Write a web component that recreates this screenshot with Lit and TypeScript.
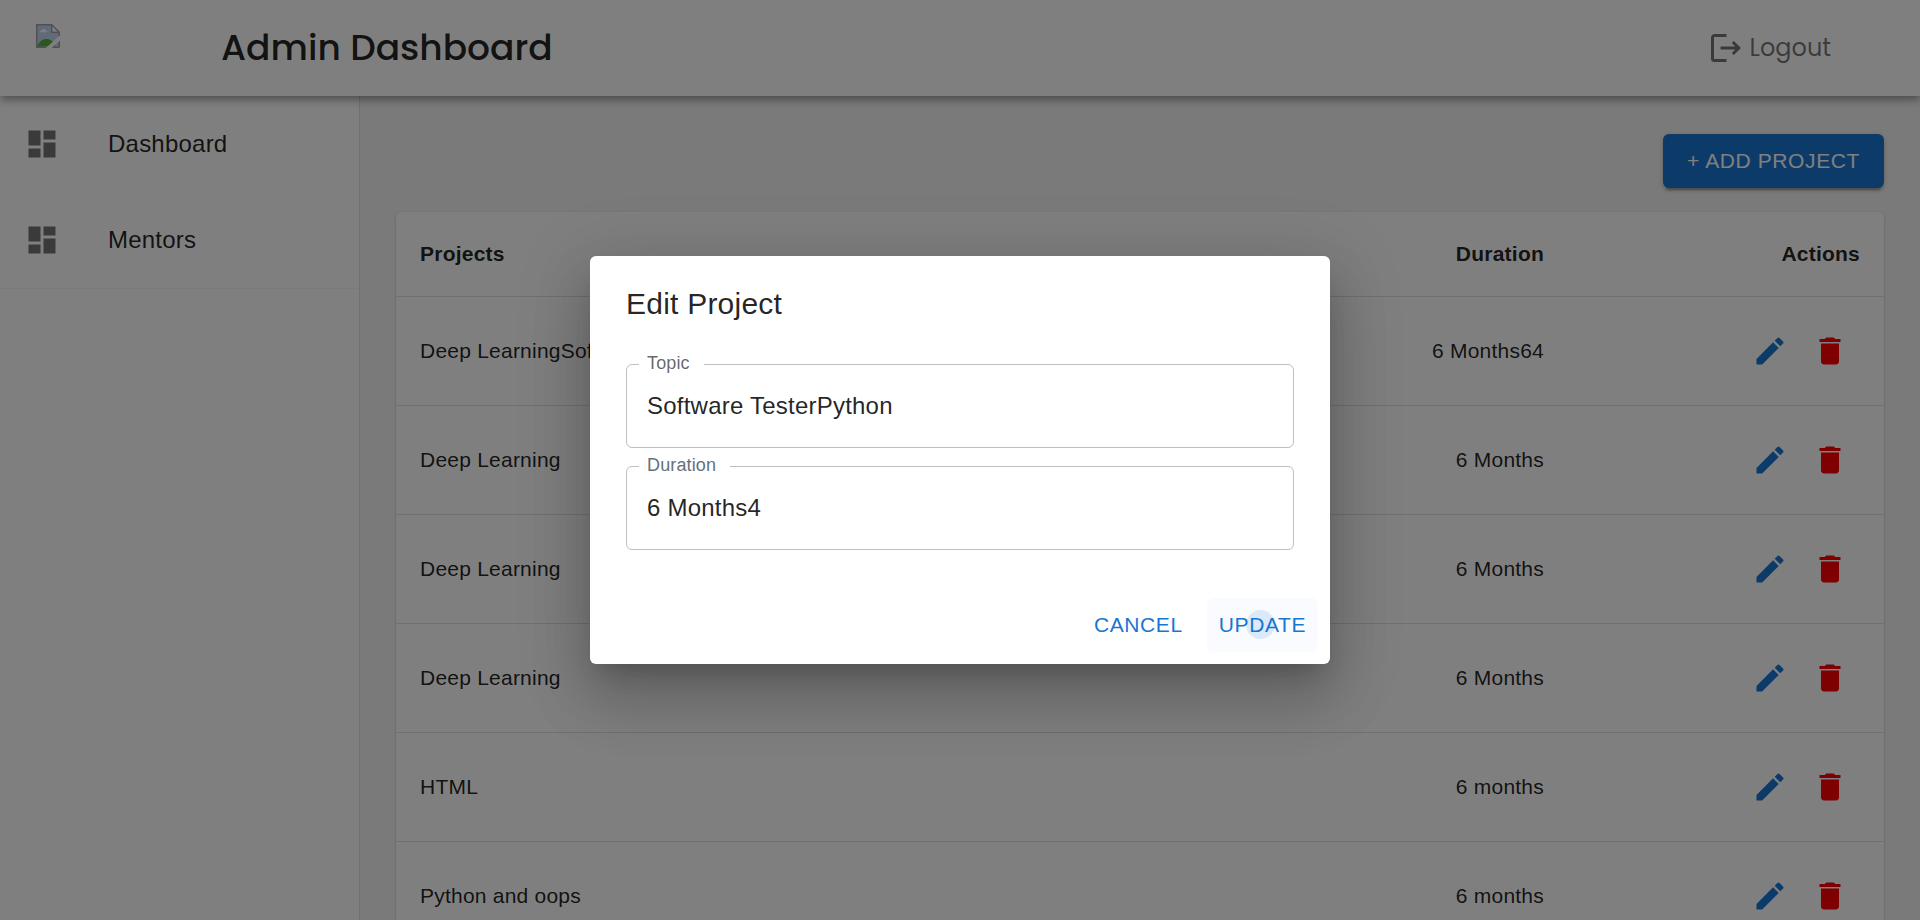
import { LitElement, html, css, svg } from "lit";
import { customElement, property } from "lit/decorators.js";

const icons = {
  dashboard: svg`<path d="M3 13h8V3H3v10zm0 8h8v-6H3v6zm10 0h8V11h-8v10zm0-18v6h8V3h-8z"/>`,
  edit: svg`<path d="M3 17.25V21h3.75L17.81 9.94l-3.75-3.75L3 17.25zM20.71 7.04c.39-.39.39-1.02 0-1.41l-2.34-2.34a.9959.9959 0 0 0-1.41 0l-1.83 1.83 3.75 3.75 1.83-1.83z"/>`,
  trash: svg`<path d="M6 19c0 1.1.9 2 2 2h8c1.1 0 2-.9 2-2V7H6v12zM19 4h-3.5l-1-1h-5l-1 1H5v2h14V4z"/>`,
};

@customElement("app-icon")
class AppIcon extends LitElement {
  @property() name: keyof typeof icons = "edit";
  static styles = css`
    :host { display: block; width: 36px; height: 36px; }
    .glyph { display: block; width: 36px; height: 36px; fill: currentColor; }
  `;
  render() {
    return html`<svg class="glyph" viewBox="0 0 24 24">${icons[this.name]}</svg>`;
  }
}

@customElement("outlined-field")
class OutlinedField extends LitElement {
  @property() label = "";
  @property() value = "";
  static styles = css`
    :host { display: block; color: rgba(0, 0, 0, 0.6); }
    .box {
      box-sizing: border-box; height: 89px; margin: 0; min-width: 0;
      padding: 0 20px; border: 1px solid rgba(0, 0, 0, 0.25); border-radius: 6px;
    }
    .legend {
      height: 11px; padding: 0 14px 0 8px; margin-left: -8px;
      font-size: 18px; line-height: 8px; letter-spacing: 0.127px;
    }
    .value {
      font-size: 24px; line-height: 35px; letter-spacing: 0.225px;
      color: rgba(0, 0, 0, 0.87); padding-top: 18px;
    }
  `;
  render() {
    return html`<fieldset class="box">
      <legend class="legend">${this.label}</legend>
      <div class="value">${this.value}</div>
    </fieldset>`;
  }
}

@customElement("app-root")
class AppRoot extends LitElement {
  private rows = [
    ["Deep LearningSoftware Tester", "6 Months64"],
    ["Deep Learning", "6 Months"],
    ["Deep Learning", "6 Months"],
    ["Deep Learning", "6 Months"],
    ["HTML", "6 months"],
    ["Python and oops", "6 months"],
  ];

  static styles = css`
    :host {
      display: block; position: relative; height: 920px; overflow: hidden;
      font-family: "Liberation Sans", Arial, sans-serif;
      color: rgba(0, 0, 0, 0.87); background: #f5f5f5;
    }
    .page { display: flex; flex-direction: column; height: 920px; }
    .header {
      position: relative; z-index: 1; flex: none; box-sizing: border-box;
      height: 96px; display: flex; align-items: center; background: #fff;
      padding: 0 89px 0 36px; font-family: Poppins, Inter, sans-serif;
      font-feature-settings: "cv11";
      box-shadow: 0 3px 6px -1.5px rgba(0,0,0,.2), 0 6px 7.5px rgba(0,0,0,.14), 0 1.5px 15px rgba(0,0,0,.12);
    }
    .logo { width: 185px; height: 48px; flex: none; }
    .broken { display: block; width: 24px; height: 24px; }
    .title { flex: 1; margin: 0; font-size: 36px; font-weight: 500; line-height: 48px; white-space: nowrap; }
    .logout { display: flex; align-items: center; gap: 9px; font-size: 24px; line-height: 36px; color: rgba(0,0,0,.54); }
    .exit { display: block; width: 30px; height: 28px; fill: none; stroke: #757575; }
    .below { flex: 1; display: flex; min-height: 0; }
    .sidebar { box-sizing: border-box; width: 360px; flex: none; background: #fff; border-right: 1px solid rgba(0,0,0,.12); }
    .nav { border-bottom: 1px solid #f5f5f5; }
    .item { display: flex; align-items: center; height: 96px; padding-left: 24px; font-size: 24px; letter-spacing: 0.225px; }
    .item-label { line-height: 27px; padding-bottom: 1px; }
    .nav-icon { width: 84px; color: rgba(0,0,0,.54); }
    .main { flex: 1; padding: 38px 36px 0; }
    .toolbar { display: flex; justify-content: flex-end; margin-bottom: 24px; }
    .add {
      height: 54px; width: 221px; border-radius: 6px; background: #1976d2; color: #fff;
      font-size: 21px; line-height: 53px; letter-spacing: 0.6px; text-align: center;
      box-shadow: 0 4.5px 1.5px -3px rgba(0,0,0,.2), 0 3px 3px rgba(0,0,0,.14), 0 1.5px 7.5px rgba(0,0,0,.12);
    }
    .card {
      background: #fff; border-radius: 6px;
      box-shadow: 0 3px 1.5px -1.5px rgba(0,0,0,.2), 0 1.5px 1.5px rgba(0,0,0,.14), 0 1.5px 4.5px rgba(0,0,0,.12);
    }
    .row {
      box-sizing: border-box; height: 109px; display: grid; align-items: center;
      grid-template-columns: 1fr 300px 316px; padding: 0 24px;
      border-bottom: 1px solid #e0e0e0; font-size: 21px; letter-spacing: 0.225px;
    }
    .head { height: 85px; font-weight: 700; }
    .cell { line-height: 23px; padding-bottom: 1px; }
    .right { text-align: right; }
    .actions { display: flex; justify-content: flex-end; }
    .action { padding: 12px; }
    .blue { color: #1976d2; }
    .red { color: #f00; }
    .backdrop {
      position: absolute; inset: 0; z-index: 2; display: flex;
      align-items: center; justify-content: center; background: rgba(0,0,0,.5);
    }
    .dialog {
      box-sizing: border-box; width: 740px; height: 408px; display: flex; flex-direction: column;
      background: #fff; border-radius: 6px;
      box-shadow: 0 16.5px 22.5px -10.5px rgba(0,0,0,.2), 0 36px 57px 4.5px rgba(0,0,0,.14), 0 13.5px 69px 12px rgba(0,0,0,.12);
    }
    .dialog-title { margin: 0; padding: 24px 36px 1px; font-size: 30px; font-weight: 400; line-height: 47px; letter-spacing: 0.225px; }
    .fields { display: flex; flex-direction: column; gap: 13px; padding: 31px 36px 0; }
    .fading { color: #65707a; }
    .buttons { margin-top: auto; display: flex; justify-content: flex-end; gap: 12px; padding: 12px; }
    .button {
      position: relative; box-sizing: border-box; height: 54px; padding: 0 12px; border-radius: 6px;
      font-size: 21px; line-height: 53px; letter-spacing: 0.6px; color: #1976d2;
    }
    .hover { background: #f9fbfe; }
    .ripple { position: absolute; left: 39px; top: 12px; width: 29px; height: 29px; border-radius: 50%; background: rgba(25,118,210,.13); }
  `;

  render() {
    return html`
      <div class="page">
        <header class="header">
          <div class="logo">
            <svg class="broken" viewBox="0 0 16 16">
              <path fill="#c4d5f5" d="M.5.5h10l5 5v10H.5z"/>
              <path fill="#fff" d="M2.500 5.500c0-1 1-1.300 1.500-1.300C4.300 3 6 3 6.300 4.200c.8 0 1.300.6 1.200 1.300z"/>
              <path fill="#50b534" d="M1 15c1.500-6.500 10-7 12 0z"/>
              <path fill="none" stroke="#a0a0a0" d="M15.500 15.500H.5V.5h10l5 5v10M10.500.5v5h5"/>
              <path fill="#fff" d="M11 1.700L14.300 5H11zM6.500 16L16 7.500V11l-5.500 5z"/>
            </svg>
          </div>
          <h1 class="title">Admin Dashboard</h1>
          <div class="logout">
            <svg class="exit" viewBox="0 0 30 28">
              <path stroke-width="3" d="M15.500 1.500H3.500a2 2 0 0 0-2 2v21a2 2 0 0 0 2 2h12"/>
              <path stroke-width="3" d="M9.500 14H27.500M21.800 8l6 6-6 6"/>
            </svg>
            <span>Logout</span>
          </div>
        </header>
        <div class="below">
          <aside class="sidebar">
            <nav class="nav">
              ${["Dashboard", "Mentors"].map((label) => html`
                <div class="item">
                  <app-icon class="nav-icon" name="dashboard"></app-icon>
                  <span class="item-label">${label}</span>
                </div>`)}
            </nav>
          </aside>
          <main class="main">
            <div class="toolbar"><div class="add">+ ADD PROJECT</div></div>
            <section class="card">
              <div class="row head">
                <div class="cell">Projects</div>
                <div class="cell right">Duration</div>
                <div class="cell right">Actions</div>
              </div>
              ${this.rows.map(([name, duration]) => html`
                <div class="row">
                  <div class="cell">${name}</div>
                  <div class="cell right">${duration}</div>
                  <div class="actions">
                    <app-icon class="action blue" name="edit"></app-icon>
                    <app-icon class="action red" name="trash"></app-icon>
                  </div>
                </div>`)}
            </section>
          </main>
        </div>
      </div>
      <div class="backdrop">
        <div class="dialog" role="dialog">
          <h2 class="dialog-title">Edit Project</h2>
          <div class="fields">
            <outlined-field label="Topic" value="Software TesterPython"></outlined-field>
            <outlined-field class="fading" label="Duration" value="6 Months4"></outlined-field>
          </div>
          <div class="buttons">
            <div class="button">CANCEL</div>
            <div class="button hover"><span class="ripple"></span>UPDATE</div>
          </div>
        </div>
      </div>`;
  }
}
